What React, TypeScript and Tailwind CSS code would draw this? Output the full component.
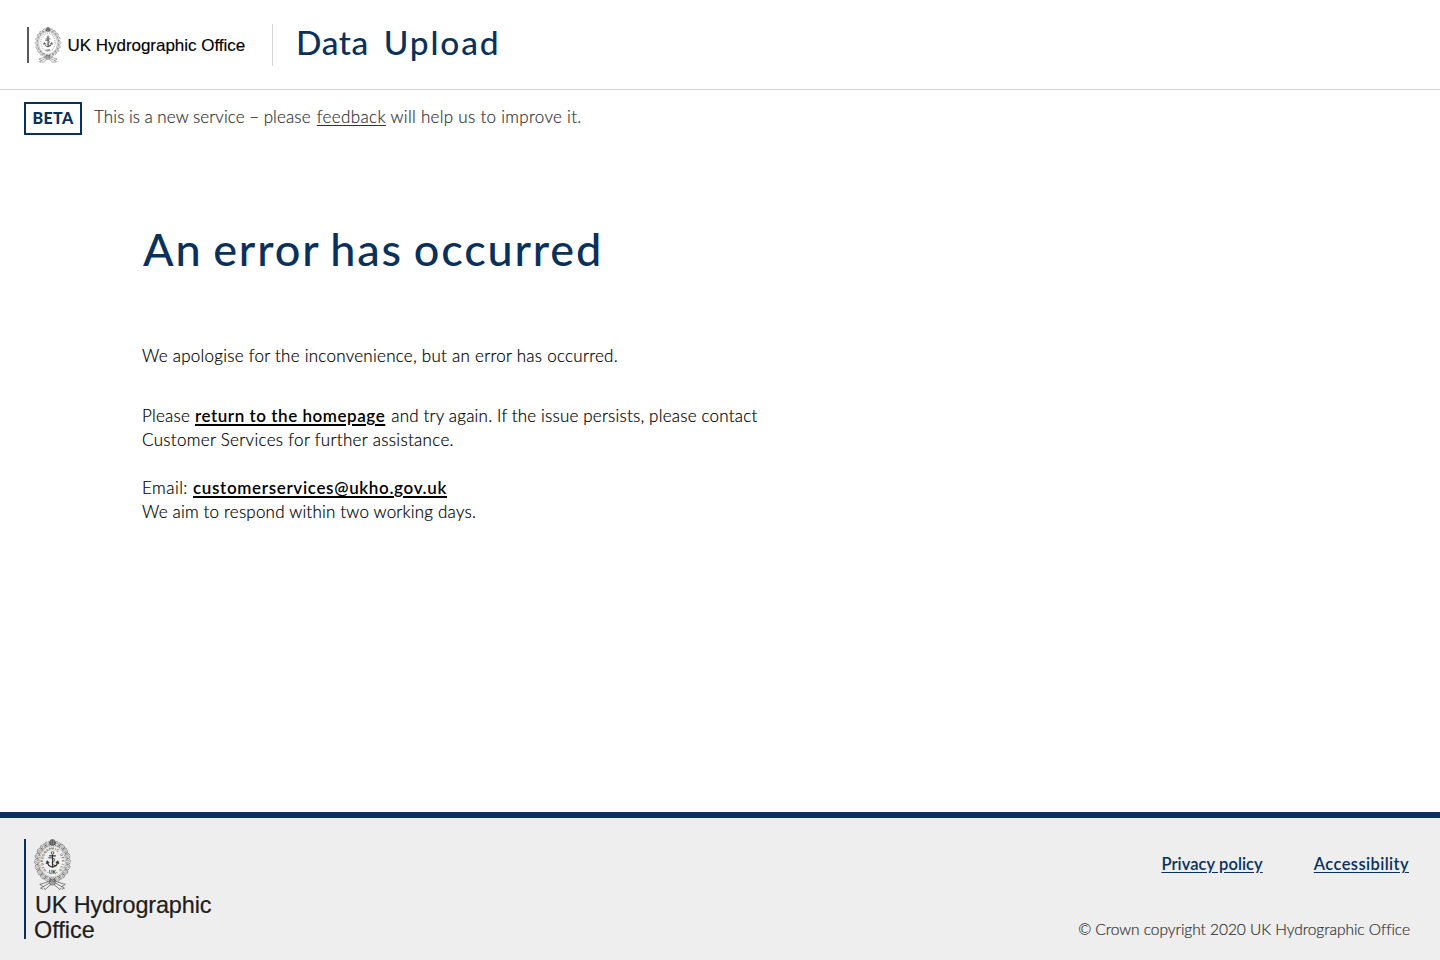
const RING = "HYDROGRAPHIC OFFICE".split("");

function Crest({ className, detailed = false }: { className: string; detailed?: boolean }) {
  const leaves = Array.from({ length: 20 }, (_, i) => {
    const a = (i / 20) * Math.PI * 2;
    return { x: 50 + Math.sin(a) * 42, y: 60 - Math.cos(a) * 49, r: (a * 180) / Math.PI };
  });
  return (
    <svg viewBox="0 0 100 136" className={className} fill="none" stroke="#333333" aria-hidden="true">
      {leaves.map((l, i) => (
        <g key={i} transform={`translate(${l.x} ${l.y}) rotate(${l.r})`}>
          <ellipse rx="7.5" ry="6.2" strokeWidth="2" strokeOpacity="0.6" fill="#333333" fillOpacity="0.08" strokeDasharray="9 2.5" />
          <path d="M-4 3Q-3 -2 1 -3M1 4Q3 2 4 -1" strokeWidth="1.8" strokeOpacity="0.5" />
        </g>
      ))}
      <ellipse cx="50" cy="60" rx="34.5" ry="41.5" strokeWidth="1.2" strokeOpacity="0.4" />
      {detailed ? (
        <>
          {RING.map((c, i) => {
            const d = -132 + (i * 264) / (RING.length - 1);
            const a = (d * Math.PI) / 180;
            return (
              <text
                key={i}
                transform={`translate(${50 + Math.sin(a) * 25} ${60 - Math.cos(a) * 31}) rotate(${d})`}
                textAnchor="middle"
                fill="#333333"
                fillOpacity="0.75"
                stroke="none"
                fontSize="9.5"
                fontFamily="Liberation Sans, sans-serif"
                fontWeight="700"
              >
                {c}
              </text>
            );
          })}
          <text x="50" y="94" textAnchor="middle" fill="#333333" stroke="none" fontSize="13" fontFamily="Liberation Sans, sans-serif" fontWeight="700">·UK·</text>
        </>
      ) : (
        <>
          <ellipse cx="50" cy="58" rx="27" ry="34" strokeWidth="5" strokeOpacity="0.4" strokeDasharray="3 4" />
          <path d="M43 84V90H48V84M52 83V91M58 83L53 87L58 91" strokeWidth="2" strokeOpacity="0.8" />
        </>
      )}
      <circle cx="50" cy="37" r="3.5" strokeWidth="2.2" />
      <path d="M50 41V74M41 45H59M36 61Q38 73 50 75Q62 73 64 61M33 66L36 59L41 64M59 64L64 59L67 66" strokeWidth="3" />
      <path d="M39 50Q63 50 53 60T61 71" strokeWidth="2.4" />
      <circle cx="50" cy="9" r="7.5" strokeWidth="2.2" strokeOpacity="0.8" fill="#333333" fillOpacity="0.25" />
      <path d="M43 10H57M46 5H54M50 2V16" strokeWidth="1.3" />
      <circle cx="50" cy="115" r="8" strokeWidth="1.6" strokeOpacity="0.7" fill="#333333" fillOpacity="0.35" />
      <path d="M43 117L18 131L25 134M42 113L16 121L26 127M46 121L30 135L27 130M57 117L82 131L75 134M58 113L84 121L74 127M54 121L70 135L73 130" strokeWidth="2.4" strokeOpacity="0.65" />
    </svg>
  );
}

export default function App() {
  return (
    <div className="flex h-[960px] flex-col overflow-hidden bg-white font-['Lato',sans-serif] text-black">
      <header className="flex h-[90px] shrink-0 items-start border-b border-[#d5d5d5] pl-[27px]">
        <a href="#" className="mt-[27px] flex h-9 w-[245px] items-start border-l-2 border-[#58585a]">
          <Crest className="ml-[5px] h-9 w-[28px] shrink-0" />
          <span className="ml-[5.5px] mt-[9px] whitespace-nowrap font-['Liberation_Sans',sans-serif] text-[17px] leading-5 tracking-[-0.03px] [-webkit-text-stroke:0.15px]">UK Hydrographic Office</span>
        </a>
        <h1 className="mt-6 flex h-[42px] gap-[15px] whitespace-nowrap border-l border-[#d5d5d5] pl-[23px] text-[33.5px] font-medium leading-[37px] text-[#09315b]">
          <span className="tracking-[0.6px]">Data</span>
          <span className="tracking-[1.8px]">Upload</span>
        </h1>
      </header>
      <section className="flex h-[45px] shrink-0 items-start pl-6 pt-3">
        <strong className="flex h-[33px] w-[58px] items-center justify-center border-2 border-[#09315b] pb-0.5 text-[16px] font-black leading-5 tracking-[0.4px] text-[#09315b]">BETA</strong>
        <p className="ml-3 mt-[3px] whitespace-nowrap text-[17px] font-light leading-6 text-[#333333] [-webkit-text-stroke:0.2px]">
          <span className="tracking-[0.11px] [word-spacing:-0.3px]">This is a new service – please </span>
          <a href="#" className="ml-[1.7px] tracking-[0.37px] underline decoration-1 underline-offset-2">feedback</a>
          <span className="tracking-[0.3px]"> will help us to improve it.</span>
        </p>
      </section>
      <main className="flex flex-1 flex-col pl-[142px] pt-[87px] [&>p]:[-webkit-text-stroke:0.2px]">
        <h2 className="ml-px whitespace-nowrap text-[45px] font-medium leading-[54px] tracking-[1.85px] [word-spacing:-2.5px] text-[#09315b]">An error has occurred</h2>
        <p className="mt-[68px] whitespace-nowrap text-[17px] font-light leading-6 tracking-[0.26px]">We apologise for the inconvenience, but an error has occurred.</p>
        <p className="mt-9 whitespace-nowrap text-[17px] font-light leading-6">
          <span className="tracking-[0.24px]">Please </span>
          <a href="#" className="mr-[1.5px] font-semibold tracking-[0.55px] underline decoration-[1.5px] underline-offset-[1.5px] [-webkit-text-stroke:0]">return to the homepage</a>
          <span className="tracking-[0.24px] [word-spacing:-0.3px]"> and try again. If the issue persists, please contact</span>
          <br />
          <span className="tracking-[0.31px]">Customer Services for further assistance.</span>
        </p>
        <p className="mt-6 whitespace-nowrap text-[17px] font-light leading-6">
          <span className="tracking-[0.47px]">Email: </span>
          <a href="#" className="font-semibold tracking-[0.66px] underline decoration-[1.5px] underline-offset-[1.5px] [-webkit-text-stroke:0]">customerservices@ukho.gov.uk</a>
          <br />
          <span className="tracking-[0.2px]">We aim to respond within two working days.</span>
        </p>
      </main>
      <footer className="flex h-[148px] shrink-0 justify-between border-t-[6px] border-[#09315b] bg-[#eeeeee] pl-6 pr-[30px]">
        <a href="#" className="mt-[21px] flex h-[100px] flex-col border-l-2 border-[#09315b] pl-2">
          <Crest detailed className="-ml-px h-[51px] w-[39px] shrink-0" />
          <span className="mt-[2.5px] whitespace-nowrap font-['Liberation_Sans',sans-serif] text-[23.4px] leading-[25px] text-[#1d1d1b] [-webkit-text-stroke:0.2px]">
            <span className="ml-px tracking-[-0.12px]">UK Hydrographic</span>
            <br />
            Office
          </span>
        </a>
        <div className="flex flex-col items-end">
          <nav className="mr-px mt-[34px] flex gap-[51px] text-[16.5px] font-semibold leading-6 text-[#09315b]">
            <a href="#" className="tracking-[0.07px] underline underline-offset-2">Privacy policy</a>
            <a href="#" className="tracking-[0.4px] underline underline-offset-2">Accessibility</a>
          </nav>
          <p className="mt-[41px] whitespace-nowrap text-[15.5px] font-light leading-6 tracking-[-0.04px] text-[#333333] [-webkit-text-stroke:0.2px]">© Crown copyright 2020 UK Hydrographic Office</p>
        </div>
      </footer>
    </div>
  );
}
